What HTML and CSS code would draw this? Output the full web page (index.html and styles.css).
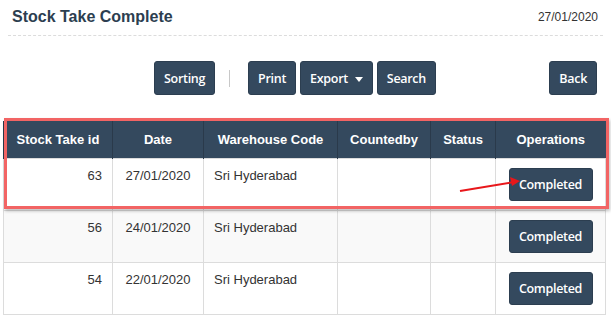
FILE: index.html
```html
<!DOCTYPE html>
<html lang="en">
<head>
  <meta charset="UTF-8">
  <title>Stock Take Complete</title>
  <link rel="stylesheet" href="styles.css">
</head>
<body>

  <div class="page-head">
    <h1 class="title">Stock Take Complete</h1>
    <span class="today">27/01/2020</span>
  </div>

  <div class="toolbar">
    <div class="actions">
      <button class="btn">Sorting</button>
      <span class="sep"></span>
      <button class="btn">Print</button>
      <button class="btn">Export <span class="caret"></span></button>
      <button class="btn">Search</button>
    </div>
    <button class="btn">Back</button>
  </div>

  <div class="grid-wrap">
    <table class="grid">
      <colgroup>
        <col style="width:109px">
        <col style="width:91px">
        <col style="width:134px">
        <col style="width:93px">
        <col style="width:65px">
        <col style="width:110px">
      </colgroup>
      <thead>
        <tr>
          <th>Stock Take id</th>
          <th>Date</th>
          <th>Warehouse Code</th>
          <th>Countedby</th>
          <th>Status</th>
          <th>Operations</th>
        </tr>
      </thead>
      <tbody>
        <tr>
          <td class="num">63</td>
          <td class="center">27/01/2020</td>
          <td>Sri Hyderabad</td>
          <td></td>
          <td></td>
          <td class="ops"><button class="btn small">Completed</button></td>
        </tr>
        <tr class="alt">
          <td class="num">56</td>
          <td class="center">24/01/2020</td>
          <td>Sri Hyderabad</td>
          <td></td>
          <td></td>
          <td class="ops"><button class="btn small">Completed</button></td>
        </tr>
        <tr>
          <td class="num">54</td>
          <td class="center">22/01/2020</td>
          <td>Sri Hyderabad</td>
          <td></td>
          <td></td>
          <td class="ops"><button class="btn small">Completed</button></td>
        </tr>
        <tr class="alt">
          <td class="num">&nbsp;</td>
          <td></td>
          <td></td>
          <td></td>
          <td></td>
          <td></td>
        </tr>
      </tbody>
    </table>

    <!-- annotation drawn on top of the screenshot -->
    <div class="highlight"></div>
    <svg class="arrow" width="70" height="20" viewBox="0 0 70 20">
      <line x1="2" y1="16" x2="56" y2="7" stroke="#e8171b" stroke-width="2"/>
      <polygon points="62,6 52,2 54,11" fill="#e8171b"/>
    </svg>
  </div>

</body>
</html>
```

FILE: styles.css
```css
body {
  margin: 0;
  font-family: "Liberation Sans", Arial, sans-serif;
  color: #333;
  background: #fff;
}
.page-head {
  display: flex;
  justify-content: space-between;
  align-items: center;
  margin: 0 8px 0 8px;
  padding: 8px 5px 9px 4px;
  border-bottom: 1px dashed #dcdcdc;
}
.title {
  margin: 0;
  font-size: 16px;
  font-weight: bold;
  color: #2c3e50;
}
.today {
  font-size: 12px;
  color: #333;
}
.toolbar {
  display: flex;
  justify-content: space-between;
  align-items: center;
  padding: 25px 14px 0 154px;
}
.actions {
  display: flex;
  align-items: center;
  gap: 4px;
}
.sep {
  width: 1px;
  height: 17px;
  background: #c8c8c8;
  margin: 0 14px 0 10px;
}
.btn {
  font-family: "Open Sans", sans-serif;
  font-weight: 600;
  font-size: 12.5px;
  letter-spacing: -0.3px;
  color: #fff;
  background: #34495e;
  border: 1px solid #2c3e50;
  border-radius: 3px;
  height: 34px;
  padding: 0 9px;
  cursor: pointer;
}
.caret {
  display: inline-block;
  width: 0;
  height: 0;
  margin-left: 4px;
  vertical-align: middle;
  border-left: 4px solid transparent;
  border-right: 4px solid transparent;
  border-top: 5px solid #fff;
}
.grid-wrap {
  position: relative;
  margin-top: 26px;
  padding-left: 3px;
}
.grid {
  border-collapse: collapse;
  table-layout: fixed;
  width: 602px;
  font-size: 13px;
}
.grid th {
  background: #34495e;
  color: #fff;
  font-weight: bold;
  height: 37px;
  padding: 0 6px;
  border-left: 1px solid #2a3a4b;
  text-align: center;
}
.grid td {
  height: 52px;
  padding: 9px 10px;
  vertical-align: top;
  border: 1px solid #dcdcdc;
  box-sizing: border-box;
}
.grid tr.alt td {
  background: #f9f9f9;
}
.grid td.num {
  text-align: right;
}
.grid td.center {
  text-align: center;
}
.grid td.ops {
  text-align: center;
  padding: 9px 0 0 0;
}
.btn.small {
  height: 33px;
  width: 84px;
  padding: 0;
}
.highlight {
  position: absolute;
  left: 4px;
  top: -3px;
  width: 599px;
  height: 85px;
  border: 3px solid #f26464;
  box-shadow: 1px 2px 3px rgba(0, 0, 0, 0.25);
}
.arrow {
  position: absolute;
  left: 458px;
  top: 54px;
}
```
